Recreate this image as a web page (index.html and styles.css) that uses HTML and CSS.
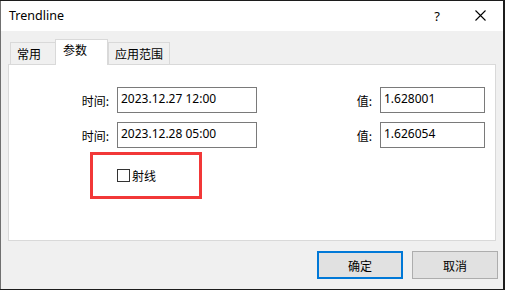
FILE: index.html
```html
<!DOCTYPE html>
<html lang="en">
<head>
    <meta charset="UTF-8">
    <title>Trendline</title>
    <link rel="stylesheet" href="styles.css">
</head>
<body>
    <div class="window">
        <div class="titlebar">
            <span class="title">Trendline</span>
            <span class="help">?</span>
            <svg class="close" width="11" height="11" viewBox="0 0 11 11">
                <path d="M0.5 0.5 L10.5 10.5 M10.5 0.5 L0.5 10.5" stroke="#000" stroke-width="1.1" fill="none"/>
            </svg>
        </div>
        <div class="content">
            <div class="tabs">
                <div class="tab tab-first">常用</div>
                <div class="tab active">参数</div>
                <div class="tab">应用范围</div>
            </div>
            <div class="panel">
                <div class="row">
                    <label class="lbl lbl-time">时间:</label>
                    <div class="field field-time">2023.12.27 12:00</div>
                    <label class="lbl lbl-val">值:</label>
                    <div class="field field-val">1.628001</div>
                </div>
                <div class="row">
                    <label class="lbl lbl-time">时间:</label>
                    <div class="field field-time">2023.12.28 05:00</div>
                    <label class="lbl lbl-val">值:</label>
                    <div class="field field-val">1.626054</div>
                </div>
                <div class="highlight">
                    <span class="check"></span>
                    <span class="check-label">射线</span>
                </div>
            </div>
            <div class="buttons">
                <button class="btn btn-default">确定</button>
                <button class="btn">取消</button>
            </div>
        </div>
    </div>
</body>
</html>
```

FILE: styles.css
```css
body {
    margin: 0;
    background-color: #1c1c1c;
    font-family: "Noto Sans", "Noto Sans CJK SC", sans-serif;
    font-size: 12px;
    color: #000;
}
.window {
    width: 502px;
    height: 288px;
    margin-top: 1px;
    border-left: 1px solid #707070;
    background-color: #f0f0f0;
}
.titlebar {
    height: 30px;
    background-color: #fff;
    display: flex;
    align-items: center;
}
.title {
    padding-left: 8px;
    font-size: 12.5px;
    flex: 1;
    margin-top: -1px;
}
.help {
    font-size: 13px;
    margin-right: 35px;
    margin-top: -1px;
}
.close {
    margin-right: 17px;
    margin-top: -1px;
}
.tabs {
    display: flex;
    align-items: flex-end;
    padding-left: 9px;
    padding-top: 8px;
    height: 25px;
}
.tab {
    height: 21px;
    border: 1px solid #d9d9d9;
    border-bottom: none;
    background-color: #f0f0f0;
    padding: 0 6px;
    line-height: 22px;
    font-family: "Noto Sans CJK SC", sans-serif;
}
.tab-first {
    width: 32px;
    border-right: none;
}
.tab.active {
    height: 25px;
    width: 38px;
    background-color: #fff;
    line-height: 20px;
    position: relative;
    z-index: 1;
    margin-bottom: -1px;
    padding-left: 7px;
}
.panel {
    margin-left: 7px;
    width: 486px;
    height: 175px;
    background-color: #fff;
    border: 1px solid #d9d9d9;
}
.row {
    display: flex;
    align-items: center;
    margin-top: 9px;
    height: 26px;
}
.row:first-child {
    margin-top: 22px;
}
.lbl {
    text-align: right;
    font-family: "Noto Sans CJK SC", sans-serif;
}
.lbl-time {
    width: 100px;
}
.lbl-val {
    width: 115px;
}
.field {
    height: 24px;
    border: 1px solid #7a7a7a;
    margin-left: 8px;
    line-height: 22px;
    padding-left: 3px;
    box-sizing: border-box;
    height: 26px;
}
.field-time {
    width: 140px;
}
.field-val {
    width: 105px;
}
.highlight {
    margin-left: 81px;
    margin-top: 4px;
    width: 106px;
    height: 41px;
    border: 3px solid #f23838;
    display: flex;
    align-items: center;
    padding-left: 24px;
    box-sizing: content-box;
    width: 82px;
}
.check {
    width: 11px;
    height: 11px;
    border: 1px solid #333;
    background-color: #fff;
}
.check-label {
    margin-left: 2px;
    font-family: "Noto Sans CJK SC", sans-serif;
}
.buttons {
    display: flex;
    justify-content: flex-end;
    gap: 9px;
    padding-right: 5px;
    margin-top: 10px;
}
.btn {
    width: 86px;
    height: 28px;
    border: 1px solid #adadad;
    background-color: #e1e1e1;
    font-family: "Noto Sans CJK SC", sans-serif;
    font-size: 12px;
    padding: 0;
    margin: 0;
}
.btn-default {
    border: 2px solid #0078d7;
}
```
